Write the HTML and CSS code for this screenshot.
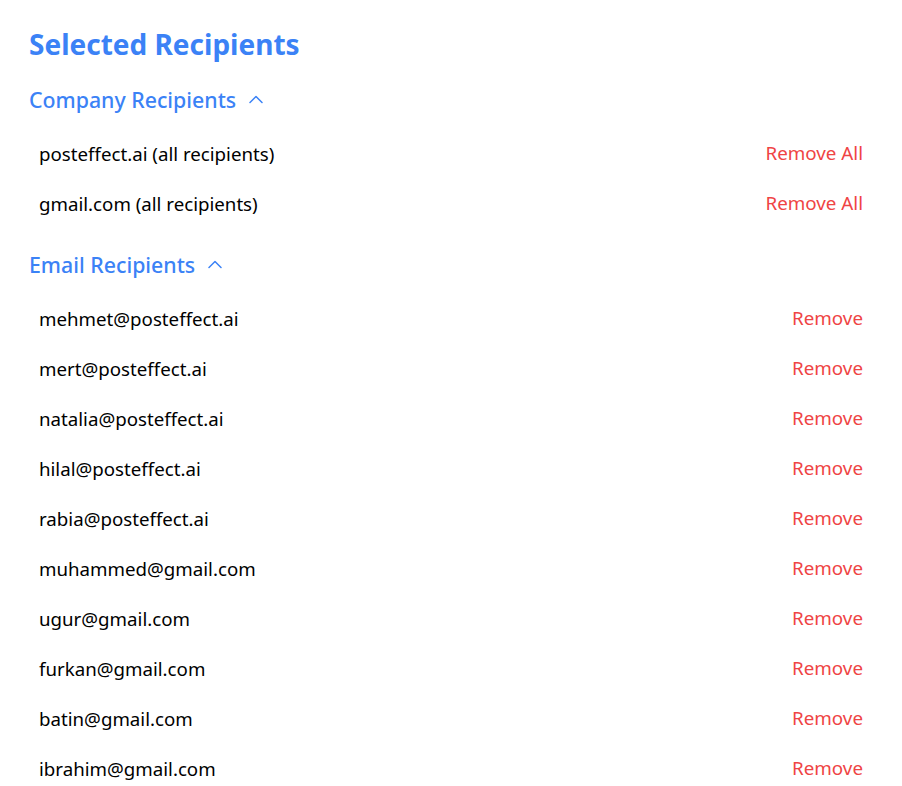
FILE: index.html
```html
<!DOCTYPE html>
<html lang="en">
<head>
<meta charset="utf-8">
<title>Selected Recipients</title>
<link rel="stylesheet" href="styles.css">
</head>
<body>
<div class="panel">
  <h2 class="title">Selected Recipients</h2>

  <section class="group">
    <div class="group-head">
      <span>Company Recipients</span>
      <svg class="chev" width="14" height="9" viewBox="0 0 14 9"><path d="M1 7.5 L7 1.5 L13 7.5" fill="none" stroke="currentColor" stroke-width="1.5" stroke-linecap="round" stroke-linejoin="round"/></svg>
    </div>
    <ul class="list">
      <li class="row"><span>posteffect.ai (all recipients)</span><button class="remove">Remove All</button></li>
      <li class="row"><span>gmail.com (all recipients)</span><button class="remove">Remove All</button></li>
    </ul>
  </section>

  <section class="group">
    <div class="group-head">
      <span>Email Recipients</span>
      <svg class="chev" width="14" height="9" viewBox="0 0 14 9"><path d="M1 7.5 L7 1.5 L13 7.5" fill="none" stroke="currentColor" stroke-width="1.5" stroke-linecap="round" stroke-linejoin="round"/></svg>
    </div>
    <ul class="list">
      <li class="row"><span>mehmet@posteffect.ai</span><button class="remove">Remove</button></li>
      <li class="row"><span>mert@posteffect.ai</span><button class="remove">Remove</button></li>
      <li class="row"><span>natalia@posteffect.ai</span><button class="remove">Remove</button></li>
      <li class="row"><span>hilal@posteffect.ai</span><button class="remove">Remove</button></li>
      <li class="row"><span>rabia@posteffect.ai</span><button class="remove">Remove</button></li>
      <li class="row"><span>muhammed@gmail.com</span><button class="remove">Remove</button></li>
      <li class="row"><span>ugur@gmail.com</span><button class="remove">Remove</button></li>
      <li class="row"><span>furkan@gmail.com</span><button class="remove">Remove</button></li>
      <li class="row"><span>batin@gmail.com</span><button class="remove">Remove</button></li>
      <li class="row"><span>ibrahim@gmail.com</span><button class="remove">Remove</button></li>
    </ul>
  </section>
</div>
</body>
</html>
```

FILE: styles.css
```css
html, body {
  margin: 0;
  padding: 0;
  background: #ffffff;
}

body {
  font-family: "Noto Sans", "Open Sans", sans-serif;
  color: #000000;
}

.panel {
  padding: 26px 29px 0 29px;
}

.title {
  margin: 0;
  font-size: 28px;
  line-height: 36px;
  font-weight: 700;
  color: #3b82f6;
}

.group {
  margin-top: 24px;
}

.group + .group {
  margin-top: 23px;
}

.group-head {
  display: flex;
  align-items: center;
  gap: 13px;
  font-size: 21.3px;
  line-height: 28px;
  font-weight: 500;
  color: #3b82f6;
}

.chev {
  display: block;
  margin-top: -1px;
}

.list {
  list-style: none;
  margin: 14px 0 0 0;
  padding: 0;
}

.row {
  height: 50px;
  display: flex;
  align-items: center;
  justify-content: space-between;
  padding: 0 10px;
  font-size: 18.7px;
}

.remove {
  border: 0;
  background: none;
  padding: 0;
  font-family: inherit;
  font-size: 18.8px;
  color: #ef4444;
  cursor: pointer;
}
```
